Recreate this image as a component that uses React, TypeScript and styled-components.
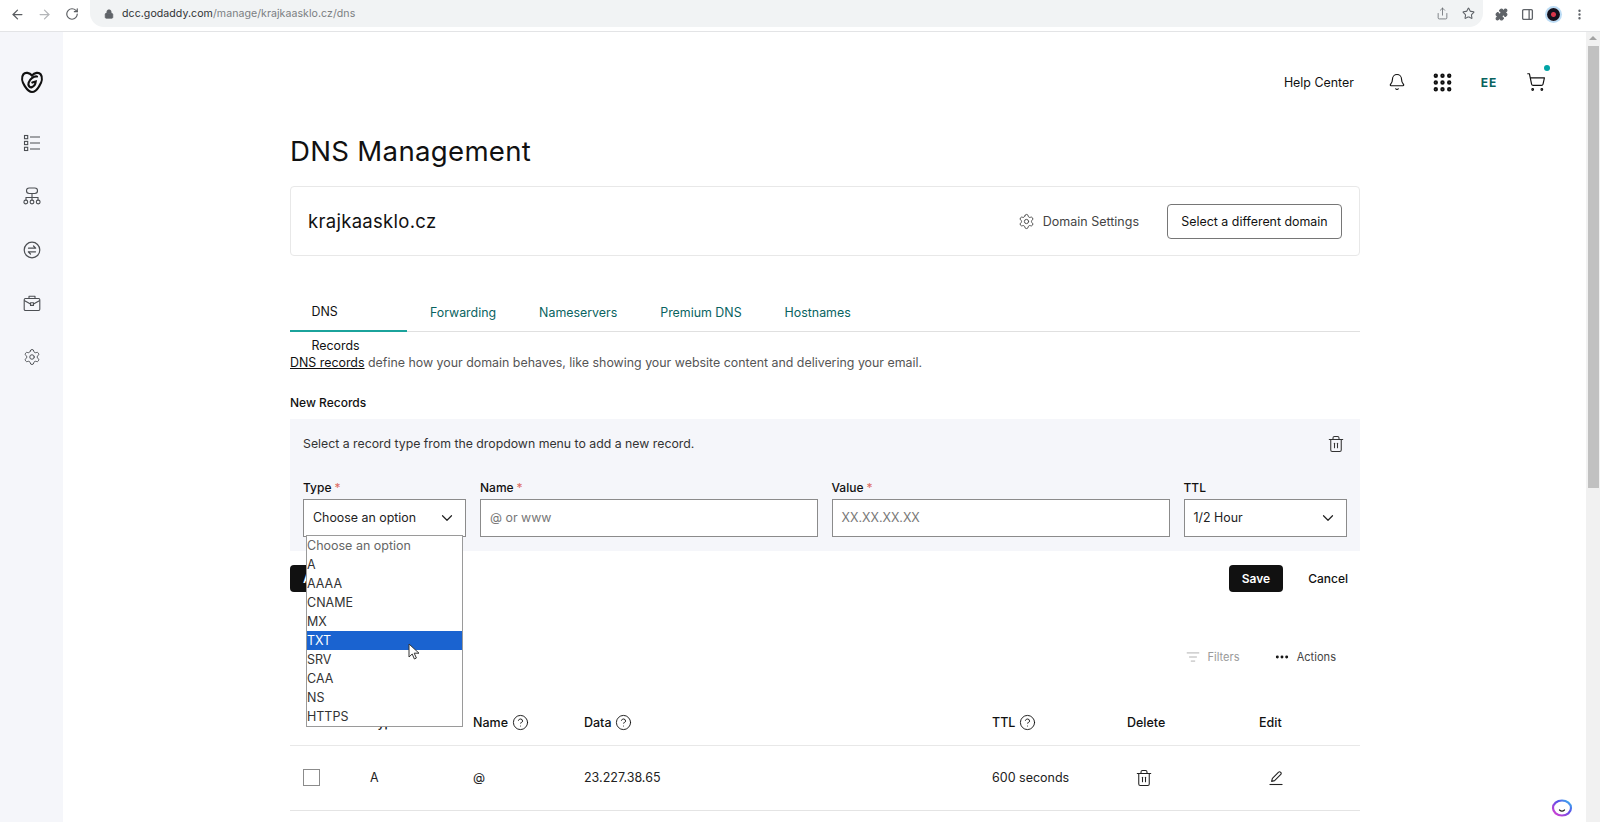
import { createGlobalStyle, styled } from "styled-components"
import {
	ArrowLeft,
	ArrowRight,
	Bell,
	ChevronDown,
	CircleHelp,
	Ellipsis,
	Grip,
	ListFilter,
	Lock,
	PanelRight,
	Puzzle,
	RotateCw,
	Settings,
	Share,
	ShoppingCart,
	Star,
	Trash2,
	MoreVertical,
} from "lucide-react"

const GlobalStyle = createGlobalStyle`
	html, body {
		margin: 0;
		height: 100%;
		overflow: hidden;
		background: #fff;
	}
	body {
		font-family: Inter, "Liberation Sans", sans-serif;
		color: #111;
	}
`

const Page = styled.div`
	position: relative;
	width: 1600px;
	height: 822px;
	overflow: hidden;
	display: flex;
	flex-direction: column;
`

const BrowserBar = styled.div`
	height: 32px;
	flex-shrink: 0;
	box-sizing: border-box;
	display: flex;
	align-items: flex-start;
	border-bottom: 1px solid #e3e4e6;
	padding-left: 4px;
	color: #5f6368;
`

const NavButton = styled.span<{ $faint?: boolean }>`
	width: 27px;
	height: 28px;
	display: flex;
	align-items: center;
	justify-content: center;
	color: ${(p) => (p.$faint ? "#b4b6b9" : "#5a5d61")};
`

const AddressBar = styled.div`
	margin-left: 5px;
	width: 1393px;
	height: 27px;
	border-radius: 0 0 14px 14px;
	background: #f1f3f4;
	display: flex;
	align-items: center;
	padding: 0 8px 0 14px;
	box-sizing: border-box;
`

const Url = styled.span`
	margin-left: 8px;
	font-size: 10.6px;
	color: #7b7e82;
	flex: 1;
	letter-spacing: 0.05px;
`

const UrlHost = styled.span`
	color: #303235;
`

const AddressIcons = styled.span`
	display: flex;
	align-items: center;
	gap: 13px;
`

const BrowserTools = styled.div`
	margin-left: 12px;
	height: 28px;
	display: flex;
	align-items: center;
	gap: 13px;
`

const Avatar = styled.span`
	width: 13px;
	height: 13px;
	border-radius: 50%;
	background: radial-gradient(circle, #d8354a 0 2px, #14121f 3px);
	box-shadow: 0 0 0 2px #bcdcf5;
`

const Body = styled.div`
	flex: 1;
	min-height: 0;
	display: flex;
`

const Sidebar = styled.nav`
	width: 63px;
	flex-shrink: 0;
	background: #f5f6fa;
	display: flex;
	flex-direction: column;
	align-items: center;
	padding-top: 38px;
	color: #4c4f53;
`

const LogoSlot = styled.span`
	height: 24px;
	margin-bottom: 39.5px;
	color: #111;
`

const SideIcon = styled.span`
	height: 18px;
	margin-bottom: 35.5px;
	display: flex;
`

const Main = styled.main`
	flex: 1;
	min-width: 0;
	display: flex;
	flex-direction: column;
`

const TopNav = styled.header`
	height: 24px;
	margin-top: 38px;
	display: flex;
	align-items: center;
	justify-content: flex-end;
	padding-right: 40px;
`

const HelpLink = styled.span`
	font-size: 12.4px;
	margin-right: 34px;
`

const TopIcon = styled.span<{ $gap: number }>`
	display: flex;
	margin-right: ${(p) => p.$gap}px;
`

const Initials = styled.span`
	font-size: 12px;
	font-weight: 700;
	letter-spacing: 0.8px;
	color: #09635f;
	margin-right: 29px;
`

const Cart = styled.span`
	position: relative;
	display: flex;
`

const CartDot = styled.span`
	position: absolute;
	top: -7px;
	right: -4px;
	width: 6px;
	height: 6px;
	border-radius: 50%;
	background: #00a4a6;
`

const Content = styled.div`
	width: 1070px;
	margin-left: 227px;
`

const Title = styled.h1`
	font-size: 27.6px;
	line-height: 36px;
	font-weight: 400;
	letter-spacing: 0.3px;
	margin: 39px 0 17px 0;
`

const DomainCard = styled.section`
	height: 70px;
	box-sizing: border-box;
	border: 1px solid #e8e8e8;
	border-radius: 4px;
	display: flex;
	align-items: center;
	padding: 0 17px 0 17px;
`

const DomainName = styled.span`
	font-size: 18.5px;
	letter-spacing: 0.3px;
	flex: 1;
`

const SettingsLink = styled.span`
	display: flex;
	align-items: center;
	gap: 8px;
	font-size: 12.5px;
	color: #444;
	margin-right: 28px;
`

const OutlineButton = styled.button`
	height: 35px;
	width: 175px;
	padding: 0;
	background: #fff;
	border: 1px solid #767676;
	border-radius: 4px;
	font: inherit;
	font-size: 12.4px;
	color: #111;
`

const Tabs = styled.div`
	margin-top: 39px;
	height: 36px;
	display: flex;
	border-bottom: 1px solid #e0e0e0;
`

const Tab = styled.span<{ $active?: boolean }>`
	font-size: 12.4px;
	line-height: ${(p) => (p.$active ? "34px" : "36px")};
	padding: 0 21.5px;
	height: 37px;
	box-sizing: border-box;
	color: ${(p) => (p.$active ? "#111" : "#09635f")};
	border-bottom: ${(p) => (p.$active ? "2px solid #1ba39c" : "none")};
	width: ${(p) => (p.$active ? "117px" : "auto")};
	margin-right: ${(p) => (p.$active ? "1.5px" : "0")};
`

const Intro = styled.p`
	margin: 23px 0 0;
	font-size: 12.4px;
	line-height: 16px;
	color: #555;
`

const IntroLink = styled.span`
	color: #111;
	text-decoration: underline;
`

const SectionLabel = styled.div`
	margin-top: 24px;
	font-size: 12px;
	line-height: 16px;
	font-weight: 500;
`

const Panel = styled.section`
	margin-top: 8px;
	height: 132px;
	box-sizing: border-box;
	background: #f5f6fa;
	padding: 15px 15px 0 13px;
`

const PanelHead = styled.div`
	display: flex;
	justify-content: space-between;
	align-items: center;
	font-size: 12.3px;
	line-height: 20px;
	color: #333;
`

const FieldRow = styled.div`
	margin-top: 26px;
	display: grid;
	grid-template-columns: 163px 337.5px 338px 163px;
	column-gap: 14px;
`

const FieldLabel = styled.label`
	display: block;
	font-size: 12px;
	line-height: 16px;
	font-weight: 500;
	margin-bottom: 2.5px;
`

const Required = styled.span`
	color: #dd6b60;
	font-weight: 400;
	margin-left: 3px;
`

const Control = styled.div<{ $muted?: boolean }>`
	height: 38px;
	box-sizing: border-box;
	background: #fff;
	border: 1px solid #8b8b8b;
	display: flex;
	align-items: center;
	justify-content: space-between;
	padding: 0 9px 0 9px;
	font-size: 12.4px;
	color: ${(p) => (p.$muted ? "#777" : "#222")};
`

const FormActions = styled.div`
	margin-top: 14px;
	display: flex;
	align-items: center;
	padding-right: 12px;
`

const DarkButton = styled.button`
	height: 27px;
	padding: 0 13px;
	border: 0;
	border-radius: 4px;
	background: #111;
	color: #fff;
	font: inherit;
	font-size: 12px;
	font-weight: 600;
`

const Spacer = styled.span`
	flex: 1;
`

const CancelLink = styled.span`
	margin-left: 25px;
	font-size: 12px;
	font-weight: 500;
`

const TableTools = styled.div`
	margin-top: 55px;
	height: 20px;
	display: flex;
	justify-content: flex-end;
	align-items: center;
	padding-right: 24px;
	font-size: 11.1px;
`

const Tool = styled.span<{ $muted?: boolean }>`
	display: flex;
	align-items: center;
	gap: ${(p) => (p.$muted ? "8px" : "7px")};
	margin-left: 34px;
	color: ${(p) => (p.$muted ? "#9a9a9a" : "#444")};
`

const TableGrid = styled.div`
	display: grid;
	grid-template-columns: 80px 103px 111px 408px 135px 132px 101px;
	align-items: center;
`

const HeaderRow = styled(TableGrid)`
	margin-top: 32.5px;
	height: 45px;
	border-bottom: 1px solid #e8e8e8;
	font-size: 12.5px;
	font-weight: 500;
`

const DataRow = styled(TableGrid)`
	height: 64px;
	border-bottom: 1px solid #e4e4e4;
	font-size: 12.5px;
	color: #222;
`

const HeadCell = styled.span`
	display: flex;
	align-items: center;
	gap: 3.5px;
`

const CheckCell = styled.span`
	padding-left: 13px;
	display: flex;
`

const Checkbox = styled.span`
	width: 17px;
	height: 17px;
	box-sizing: border-box;
	border: 1px solid #8b8b8b;
	margin-top: -1px;
`

const IconCell = styled.span<{ $indent: number }>`
	display: flex;
	padding-left: ${(p) => p.$indent}px;
`

const Scrollbar = styled.div`
	width: 14px;
	flex-shrink: 0;
	background: #f1f1f1;
	display: flex;
	flex-direction: column;
	align-items: center;
`

const ScrollArrow = styled.span`
	margin-top: 4px;
	width: 0;
	height: 0;
	border-left: 4px solid transparent;
	border-right: 4px solid transparent;
	border-bottom: 4px solid #a3a3a3;
`

const ScrollThumb = styled.span`
	margin-top: 6px;
	width: 11px;
	height: 442px;
	background: #c1c1c1;
`

const Dropdown = styled.ul`
	position: absolute;
	left: 306px;
	top: 535px;
	width: 157px;
	height: 192px;
	box-sizing: border-box;
	margin: 0;
	padding: 0;
	list-style: none;
	background: #fff;
	border: 1px solid #9a9a9a;
	font-size: 12.5px;
`

const DropdownItem = styled.li<{ $selected?: boolean; $placeholder?: boolean }>`
	height: 19px;
	line-height: 19px;
	background: ${(p) => (p.$selected ? "#1a63d0" : "transparent")};
	color: ${(p) => (p.$selected ? "#fff" : p.$placeholder ? "#666" : "#333")};
`

const Pointer = styled.svg`
	position: absolute;
	left: 408px;
	top: 643px;
`

const ChatBubble = styled.svg`
	position: absolute;
	left: 1551px;
	top: 798px;
`

const GoDaddyLogo = () => (
	<svg width="24" height="24" viewBox="0 0 24 24" fill="none" stroke="currentColor" strokeWidth="2.2" strokeLinecap="round">
		<path d="M12 5.5C9.5 2.6 5.2 2 3.4 4.2 1.2 7 2 12 4.8 16.2 7 19.6 10 22 12 22c2.2 0 5-2.2 7.2-5.8C22 12 22.8 7 20.6 4.2 18.8 2 14.5 2.6 12 5.5Z" />
		<path d="M17 6.5c-3-.6-7 2.4-8.3 6-1 3 .8 5.4 3.2 4.6 2.3-.8 3.6-3.4 3.8-5.6l-3.4 1" />
	</svg>
)

const RecordsIcon = () => (
	<svg width="18" height="18" viewBox="0 0 18 18" fill="none" stroke="currentColor" strokeWidth="1.1">
		<rect x="1.5" y="1.5" width="3.2" height="3.2" />
		<rect x="1.5" y="7.4" width="3.2" height="3.2" />
		<rect x="1.5" y="13.3" width="3.2" height="3.2" />
		<path d="M7 3h10M7 9h10M7 15h10" />
	</svg>
)

const NetworkIcon = () => (
	<svg width="18" height="18" viewBox="0 0 18 18" fill="none" stroke="currentColor" strokeWidth="1.1">
		<rect x="3.5" y="1" width="11" height="5.5" rx="2.7" />
		<path d="M9 6.5V13M3 13v-2.5h12V13" />
		<circle cx="2.8" cy="15" r="1.9" />
		<circle cx="9" cy="15" r="1.9" />
		<circle cx="15.2" cy="15" r="1.9" />
	</svg>
)

const TransferIcon = () => (
	<svg width="18" height="18" viewBox="0 0 18 18" fill="none" stroke="currentColor" strokeWidth="1.2" strokeLinecap="round" strokeLinejoin="round">
		<circle cx="9" cy="9" r="7.8" />
		<path d="M5.5 7.2h7M10.5 5l2.2 2.2M12.5 10.8h-7M7.5 13l-2.2-2.2" />
	</svg>
)

const BriefcaseIcon = () => (
	<svg width="18" height="18" viewBox="0 0 18 18" fill="none" stroke="currentColor" strokeWidth="1.1" strokeLinejoin="round">
		<rect x="1.2" y="4.5" width="15.6" height="12" rx="1.2" />
		<path d="M6 4.5V2.2h6v2.3M1.2 6.5 7.5 10M16.8 6.5 10.5 10" />
		<rect x="7.5" y="8.8" width="3" height="2.6" />
	</svg>
)

const EditIcon = () => (
	<svg width="16" height="16" viewBox="0 0 16 16" fill="none" stroke="#222" strokeWidth="1.1" strokeLinejoin="round">
		<path d="M3.6 11.4 4.4 8.4 10.6 2.2a1.3 1.3 0 0 1 1.9 0l.3.3a1.3 1.3 0 0 1 0 1.9L6.6 10.6Z" />
		<path d="M1.5 14.5h13" />
	</svg>
)

const records = ["A", "AAAA", "CNAME", "MX", "TXT", "SRV", "CAA", "NS", "HTTPS"]

export default function App() {
	return (
		<Page>
			<GlobalStyle />
			<BrowserBar>
				<NavButton><ArrowLeft size={15} /></NavButton>
				<NavButton $faint><ArrowRight size={15} /></NavButton>
				<NavButton><RotateCw size={14} /></NavButton>
				<AddressBar>
					<Lock size={10} fill="#5f6368" />
					<Url>
						<UrlHost>dcc.godaddy.com</UrlHost>/manage/krajkaasklo.cz/dns
					</Url>
					<AddressIcons>
						<Share size={13} strokeWidth={1.4} />
						<Star size={13} />
					</AddressIcons>
				</AddressBar>
				<BrowserTools>
					<Puzzle size={13} fill="#5f6368" />
					<PanelRight size={13} strokeWidth={2.4} />
					<Avatar />
					<MoreVertical size={13} strokeWidth={2.4} />
				</BrowserTools>
			</BrowserBar>
			<Body>
				<Sidebar>
					<LogoSlot><GoDaddyLogo /></LogoSlot>
					<SideIcon><RecordsIcon /></SideIcon>
					<SideIcon><NetworkIcon /></SideIcon>
					<SideIcon><TransferIcon /></SideIcon>
					<SideIcon><BriefcaseIcon /></SideIcon>
					<SideIcon><Settings size={18} strokeWidth={1.3} /></SideIcon>
				</Sidebar>
				<Main>
					<TopNav>
						<HelpLink>Help Center</HelpLink>
						<TopIcon $gap={25}><Bell size={18} strokeWidth={1.5} /></TopIcon>
						<TopIcon $gap={27}><Grip size={23} strokeWidth={2.6} /></TopIcon>
						<Initials>EE</Initials>
						<Cart>
							<ShoppingCart size={20} strokeWidth={1.4} />
							<CartDot />
						</Cart>
					</TopNav>
					<Content>
						<Title>DNS Management</Title>
						<DomainCard>
							<DomainName>krajkaasklo.cz</DomainName>
							<SettingsLink>
								<Settings size={17} strokeWidth={1.3} />
								Domain Settings
							</SettingsLink>
							<OutlineButton>Select a different domain</OutlineButton>
						</DomainCard>
						<Tabs>
							<Tab $active>DNS Records</Tab>
							<Tab>Forwarding</Tab>
							<Tab>Nameservers</Tab>
							<Tab>Premium DNS</Tab>
							<Tab>Hostnames</Tab>
						</Tabs>
						<Intro>
							<IntroLink>DNS records</IntroLink> define how your domain behaves, like showing your website content and delivering your email.
						</Intro>
						<SectionLabel>New Records</SectionLabel>
						<Panel>
							<PanelHead>
								Select a record type from the dropdown menu to add a new record.
								<Trash2 size={18} strokeWidth={1.4} />
							</PanelHead>
							<FieldRow>
								<div>
									<FieldLabel>Type<Required>*</Required></FieldLabel>
									<Control>Choose an option<ChevronDown size={18} strokeWidth={1.6} /></Control>
								</div>
								<div>
									<FieldLabel>Name<Required>*</Required></FieldLabel>
									<Control $muted>@ or www</Control>
								</div>
								<div>
									<FieldLabel>Value<Required>*</Required></FieldLabel>
									<Control $muted>XX.XX.XX.XX</Control>
								</div>
								<div>
									<FieldLabel>TTL</FieldLabel>
									<Control>1/2 Hour<ChevronDown size={18} strokeWidth={1.6} /></Control>
								</div>
							</FieldRow>
						</Panel>
						<FormActions>
							<DarkButton>Add New Record</DarkButton>
							<Spacer />
							<DarkButton>Save</DarkButton>
							<CancelLink>Cancel</CancelLink>
						</FormActions>
						<TableTools>
							<Tool $muted><ListFilter size={14} strokeWidth={1.3} />Filters</Tool>
							<Tool><Ellipsis size={16} strokeWidth={2.4} color="#111" />Actions</Tool>
						</TableTools>
						<HeaderRow>
							<span />
							<HeadCell>Type</HeadCell>
							<HeadCell>Name<CircleHelp size={17} strokeWidth={1.3} /></HeadCell>
							<HeadCell>Data<CircleHelp size={17} strokeWidth={1.3} /></HeadCell>
							<HeadCell>TTL<CircleHelp size={17} strokeWidth={1.3} /></HeadCell>
							<HeadCell>Delete</HeadCell>
							<HeadCell>Edit</HeadCell>
						</HeaderRow>
						<DataRow>
							<CheckCell><Checkbox /></CheckCell>
							<span>A</span>
							<span>@</span>
							<span>23.227.38.65</span>
							<span>600 seconds</span>
							<IconCell $indent={8}><Trash2 size={18} strokeWidth={1.4} /></IconCell>
							<IconCell $indent={9}><EditIcon /></IconCell>
						</DataRow>
					</Content>
				</Main>
				<Scrollbar>
					<ScrollArrow />
					<ScrollThumb />
				</Scrollbar>
			</Body>
			<Dropdown>
				<DropdownItem $placeholder>Choose an option</DropdownItem>
				{records.map((r) => (
					<DropdownItem key={r} $selected={r === "TXT"}>{r}</DropdownItem>
				))}
			</Dropdown>
			<Pointer width="14" height="18" viewBox="0 0 14 18">
				<path d="M1 1v13l3.2-3 2.2 5 2-1-2.2-4.8H11Z" fill="#fff" stroke="#333" strokeWidth="1" />
			</Pointer>
			<ChatBubble width="22" height="20" viewBox="0 0 22 20" fill="none">
				<defs>
					<linearGradient id="bubble" x1="0" y1="1" x2="1" y2="0">
						<stop offset="0" stopColor="#e23fd0" />
						<stop offset="0.6" stopColor="#5b4ee8" />
						<stop offset="1" stopColor="#35c6f0" />
					</linearGradient>
				</defs>
				<ellipse cx="11" cy="10" rx="9" ry="7.5" stroke="url(#bubble)" strokeWidth="2.2" fill="#fff" />
				<path d="M8.5 12c1.4 1.2 3.6 1.2 5 0" stroke="#222" strokeWidth="1.2" strokeLinecap="round" />
			</ChatBubble>
		</Page>
	)
}
